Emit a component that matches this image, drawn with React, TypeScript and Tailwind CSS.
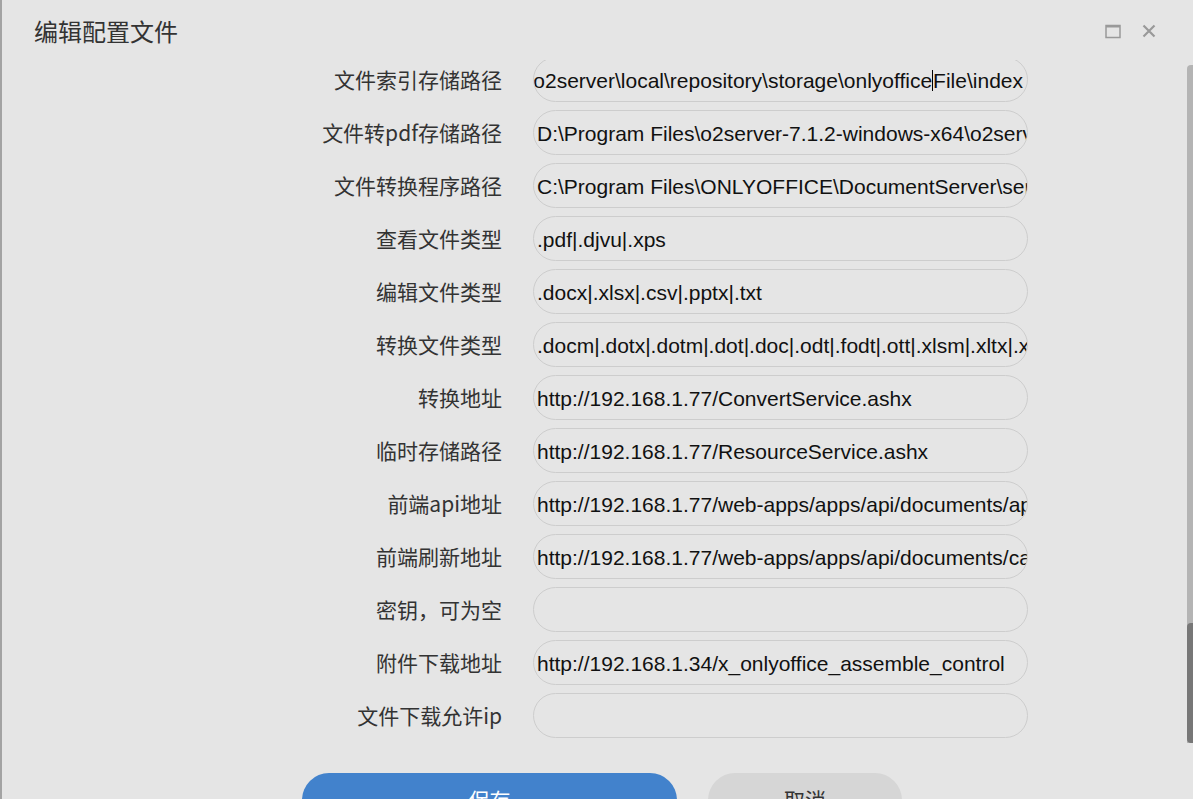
import React from "react";

const rows = [
  { label: "文件索引存储路径", value: "D:\\Program Files\\o2server-7.1.2-windows-x64\\o2server\\local\\repository\\storage\\onlyoffice", tail: "File\\index", end: true },
  { label: "文件转pdf存储路径", value: "D:\\Program Files\\o2server-7.1.2-windows-x64\\o2server\\local\\repository\\storage\\pdf" },
  { label: "文件转换程序路径", value: "C:\\Program Files\\ONLYOFFICE\\DocumentServer\\server\\FileConverter\\bin" },
  { label: "查看文件类型", value: ".pdf|.djvu|.xps" },
  { label: "编辑文件类型", value: ".docx|.xlsx|.csv|.pptx|.txt" },
  { label: "转换文件类型", value: ".docm|.dotx|.dotm|.dot|.doc|.odt|.fodt|.ott|.xlsm|.xltx|.xltm|.xlt|.xls" },
  { label: "转换地址", value: "http://192.168.1.77/ConvertService.ashx" },
  { label: "临时存储路径", value: "http://192.168.1.77/ResourceService.ashx" },
  { label: "前端api地址", value: "http://192.168.1.77/web-apps/apps/api/documents/api.js" },
  { label: "前端刷新地址", value: "http://192.168.1.77/web-apps/apps/api/documents/cache" },
  { label: "密钥，可为空", value: "" },
  { label: "附件下载地址", value: "http://192.168.1.34/x_onlyoffice_assemble_control" },
  { label: "文件下载允许ip", value: "" },
];

const cjk = "font-['Noto_Sans_CJK_SC','Noto_Sans',sans-serif]";
const latin = "font-['Liberation_Sans','Noto_Sans_CJK_SC',sans-serif]";

function Field({ value, tail, end }: any) {
  return (
    <div
      className={`flex h-[45px] w-[495px] items-center overflow-hidden rounded-full border border-[#cdcdcd] bg-[#e5e5e5] pl-[3px] pr-[4px] pt-[2px] text-[21px] text-[#111] ${latin} ${end ? "justify-end" : ""}`}
    >
      <span className="whitespace-nowrap">
        {value}
        {tail && <span className="inline-block h-[21px] w-px translate-y-[3px] bg-black" />}
        {tail}
      </span>
    </div>
  );
}

export default function App() {
  return (
    <div className="flex h-[799px] w-[1193px] overflow-hidden bg-[#e5e5e5]">
      <div className="w-[2px] bg-[#a3a3a3]" />
      <div className="flex min-w-0 flex-1 flex-col">
        <div className="flex h-[60px] shrink-0 items-center pl-[32px] pr-[31px] pt-[2px]">
          <h1 className={`flex-1 text-[24px] text-[#333] ${cjk}`}>编辑配置文件</h1>
          <svg width="16" height="15" viewBox="0 0 16 15" className="mr-[21px]">
            <rect x="1" y="1.5" width="14" height="12" fill="none" stroke="#999" strokeWidth="1.5" />
            <rect x="1" y="1" width="14" height="2.5" fill="#999" />
          </svg>
          <svg width="14" height="14" viewBox="0 0 14 14">
            <path d="M1.5 1.5 L12.5 12.5 M12.5 1.5 L1.5 12.5" stroke="#999" strokeWidth="2.2" />
          </svg>
        </div>
        <div className="flex-1 overflow-hidden">
          <div className="-mt-[3px] flex flex-col gap-[8px] pl-[300px]">
            {rows.map((r) => (
              <div key={r.label} className="flex items-center gap-[31px]">
                <div className={`w-[200px] text-right text-[21px] text-[#333] ${cjk}`}>{r.label}</div>
                <Field value={r.value} tail={r.tail} end={r.end} />
              </div>
            ))}
            <div className={`mt-[27px] flex gap-[31px] text-[21px] ${cjk}`}>
              <button className="h-[54px] w-[375px] shrink-0 rounded-full bg-[#4282cc] text-white">保存</button>
              <button className="h-[54px] w-[194px] shrink-0 rounded-full bg-[#d6d6d6] text-[#333]">取消</button>
            </div>
          </div>
        </div>
      </div>
      <div className="w-[6px] shrink-0">
        <div className="mt-[65px] flex h-[678px] flex-col justify-end rounded-tl-[4px] bg-[#b4b4b4]">
          <div className="h-[120px] rounded-l-[4px] bg-[#777]" />
        </div>
      </div>
    </div>
  );
}
